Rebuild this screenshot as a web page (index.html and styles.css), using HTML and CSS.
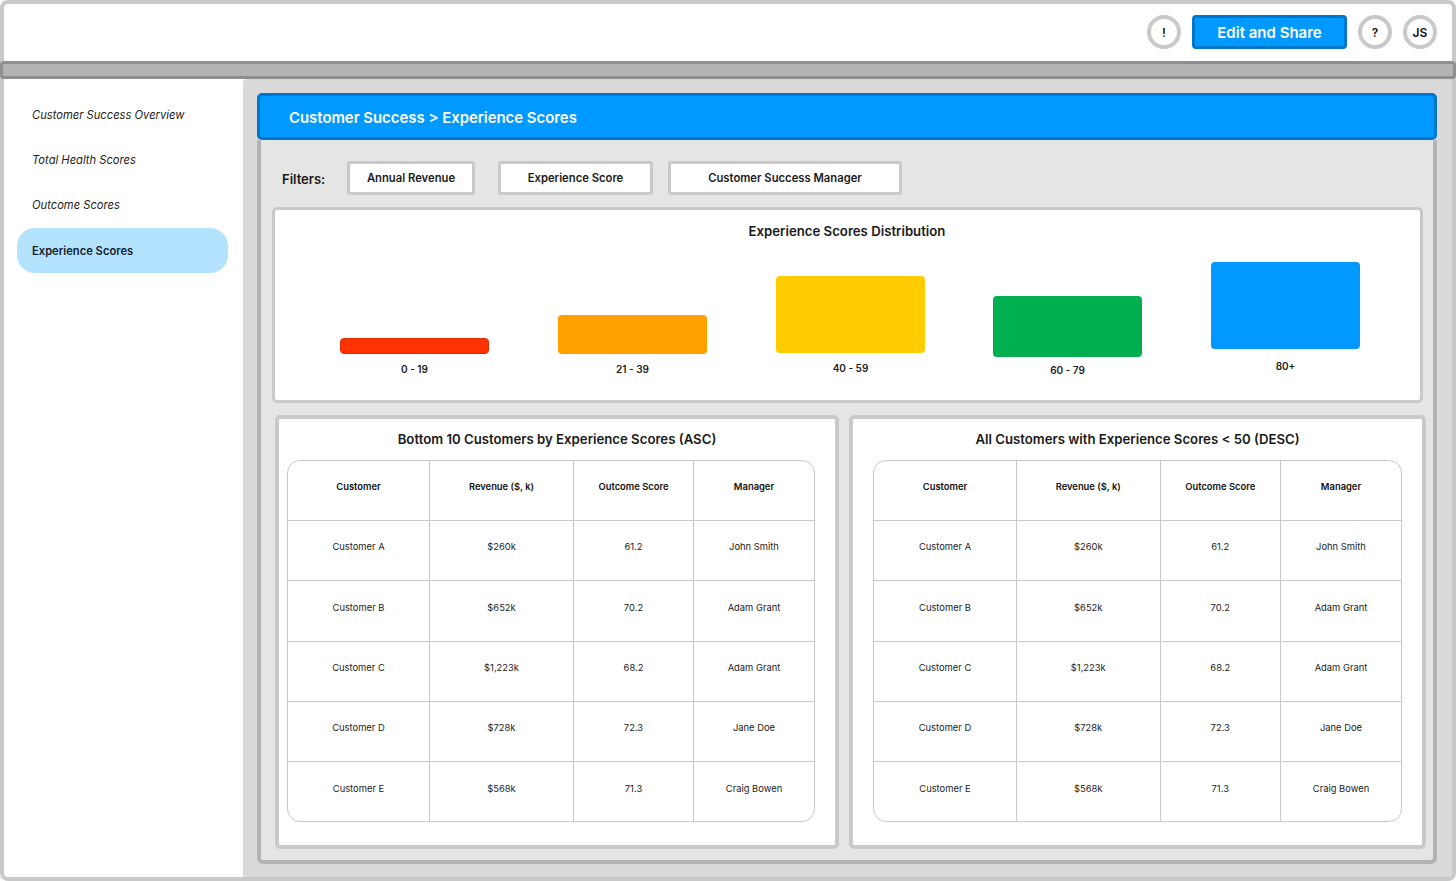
FILE: index.html
```html
<!DOCTYPE html>
<html lang="en">
<head>
<meta charset="utf-8">
<title>Experience Scores</title>
<link rel="stylesheet" href="styles.css">
</head>
<body>
<div class="frame">
  <header class="topbar">
    <div class="round">!</div>
    <button class="share">Edit and Share</button>
    <div class="round help">?</div>
    <div class="round user">JS</div>
  </header>
  <div class="divider"></div>
  <div class="workspace">
    <nav class="sidebar">
      <a class="nav">Customer Success Overview</a>
      <a class="nav">Total Health Scores</a>
      <a class="nav">Outcome Scores</a>
      <a class="nav active">Experience Scores</a>
    </nav>
    <main class="main">
      <div class="panel">
        <div class="crumb">Customer Success &gt; Experience Scores</div>
        <div class="panel-body">
          <div class="filters">
            <span class="filters-label">Filters:</span>
            <div class="filter f1">Annual Revenue</div>
            <div class="filter f2">Experience Score</div>
            <div class="filter f3">Customer Success Manager</div>
          </div>
          <section class="card chart">
            <h2 class="card-title">Experience Scores Distribution</h2>
            <div class="bars">
              <div class="col c1"><div class="bar red"></div><span class="bar-label">0 - 19</span></div>
              <div class="col c2"><div class="bar orange"></div><span class="bar-label">21 - 39</span></div>
              <div class="col c3"><div class="bar yellow"></div><span class="bar-label">40 - 59</span></div>
              <div class="col c4"><div class="bar green"></div><span class="bar-label">60 - 79</span></div>
              <div class="col c5"><div class="bar blue"></div><span class="bar-label">80+</span></div>
            </div>
          </section>
          <div class="tables">
            <section class="card tcard left">
              <h2 class="card-title">Bottom 10 Customers by Experience Scores (ASC)</h2>
              <div class="grid">
                <div class="cell head">Customer</div><div class="cell head">Revenue ($, k)</div><div class="cell head">Outcome Score</div><div class="cell head">Manager</div>
                <div class="cell">Customer A</div><div class="cell">$260k</div><div class="cell">61.2</div><div class="cell">John Smith</div>
                <div class="cell">Customer B</div><div class="cell">$652k</div><div class="cell">70.2</div><div class="cell">Adam Grant</div>
                <div class="cell">Customer C</div><div class="cell">$1,223k</div><div class="cell">68.2</div><div class="cell">Adam Grant</div>
                <div class="cell">Customer D</div><div class="cell">$728k</div><div class="cell">72.3</div><div class="cell">Jane Doe</div>
                <div class="cell">Customer E</div><div class="cell">$568k</div><div class="cell">71.3</div><div class="cell">Craig Bowen</div>
              </div>
            </section>
            <section class="card tcard right">
              <h2 class="card-title">All Customers with Experience Scores &lt; 50 (DESC)</h2>
              <div class="grid">
                <div class="cell head">Customer</div><div class="cell head">Revenue ($, k)</div><div class="cell head">Outcome Score</div><div class="cell head">Manager</div>
                <div class="cell">Customer A</div><div class="cell">$260k</div><div class="cell">61.2</div><div class="cell">John Smith</div>
                <div class="cell">Customer B</div><div class="cell">$652k</div><div class="cell">70.2</div><div class="cell">Adam Grant</div>
                <div class="cell">Customer C</div><div class="cell">$1,223k</div><div class="cell">68.2</div><div class="cell">Adam Grant</div>
                <div class="cell">Customer D</div><div class="cell">$728k</div><div class="cell">72.3</div><div class="cell">Jane Doe</div>
                <div class="cell">Customer E</div><div class="cell">$568k</div><div class="cell">71.3</div><div class="cell">Craig Bowen</div>
              </div>
            </section>
          </div>
        </div>
      </div>
    </main>
  </div>
</div>
</body>
</html>
```
FILE: styles.css
```css
* { box-sizing: border-box; }
html, body { margin: 0; padding: 0; }
body {
  width: 1456px;
  height: 881px;
  overflow: hidden;
  background: #fff;
  font-family: Inter, "Liberation Sans", sans-serif;
  color: #1a1a1a;
}
.frame {
  width: 1456px;
  height: 881px;
  border: 4px solid #c9c9c9;
  border-radius: 8px;
  display: flex;
  flex-direction: column;
  background: #fff;
}
.topbar {
  height: 57px;
  flex: none;
  display: flex;
  align-items: center;
  justify-content: flex-end;
  padding: 0 15px 1px 0;
}
.round {
  width: 34px;
  height: 34px;
  border: 4px solid #c9c9c9;
  border-radius: 50%;
  display: flex;
  align-items: center;
  justify-content: center;
  font-size: 12px;
  font-weight: 600;
  color: #111;
  background: #fff;
}
.share {
  width: 155px;
  height: 34px;
  margin-left: 11px;
  border: 3px solid #0077cc;
  border-radius: 4px;
  background: #0099ff;
  color: #fff;
  font-family: inherit;
  font-size: 15px;
  font-weight: 600;
  padding: 0;
}
.help { margin-left: 11px; }
.user { margin-left: 11px; }
.divider {
  flex: none;
  height: 18px;
  margin: 0 -4px;
  background: #b3b3b3;
  border: 3px solid #8f8f8f;
  border-radius: 4px;
}
.workspace {
  flex: 1;
  min-height: 0;
  display: flex;
}
.sidebar {
  width: 239px;
  flex: none;
  padding: 13px 15px 0 13px;
  display: flex;
  flex-direction: column;
  gap: 0.33px;
}
.nav {
  height: 45px;
  display: flex;
  align-items: center;
  padding-left: 15px;
  font-size: 11.2px;
  font-style: italic;
  color: #222;
}
.nav.active {
  background: #b3e3ff;
  border-radius: 18px;
  font-style: normal;
  font-weight: 600;
  color: #14202b;
  padding-top: 1px;
}
.main {
  flex: 1;
  background: #d9d9d9;
  border-radius: 4px 0 0 0;
  padding: 14px 15px 13px 14px;
  min-width: 0;
}
.panel {
  height: 100%;
  display: flex;
  flex-direction: column;
}
.crumb {
  flex: none;
  height: 47px;
  background: #0099ff;
  border: 3px solid #0077cc;
  border-radius: 5px;
  color: #fff;
  font-size: 14.9px;
  font-weight: 600;
  display: flex;
  align-items: center;
  padding: 2px 0 0 29px;
}
.panel-body {
  flex: 1;
  min-height: 0;
  background: #e5e5e5;
  border: 4px solid #b3b3b3;
  border-top: 0;
  border-radius: 0 0 6px 6px;
  padding-left: 11px;
  display: flex;
  flex-direction: column;
}
.filters {
  height: 67px;
  flex: none;
  display: flex;
  align-items: center;
  padding: 9px 0 0 10px;
}
.filters-label {
  font-size: 13px;
  font-weight: 600;
  width: 65px;
  padding-top: 2px;
}
.filter {
  height: 34px;
  background: #fff;
  border: 3px solid #c9c9c9;
  border-radius: 3px;
  font-size: 11.25px;
  font-weight: 600;
  color: #1a1a1a;
  display: flex;
  align-items: center;
  justify-content: center;
}
.f1 { width: 128px; }
.f2 { width: 155px; margin-left: 23px; }
.f3 { width: 234px; margin-left: 15px; }
.card {
  background: #fff;
  border: 4px solid #c9c9c9;
  border-radius: 5px;
}
.card-title {
  margin: 0;
  font-size: 13.2px;
  font-weight: 600;
  text-align: center;
  color: #1a1a1a;
  line-height: 16px;
}
.chart {
  flex: none;
  width: 1151px;
  height: 196px;
  border-width: 3px;
  padding-top: 13px;
}
.chart .card-title { padding-right: 1px; }
.bars {
  display: flex;
  padding-left: 65px;
  gap: 69px;
  height: 159px;
  align-items: flex-end;
}
.col {
  width: 149px;
  display: flex;
  flex-direction: column;
  align-items: center;
}
.c1, .c2 { margin-bottom: 23px; }
.c3 { margin-bottom: 24px; }
.c4 { margin-bottom: 22px; margin-left: -1px; }
.c5 { margin-bottom: 26px; }
.bar {
  width: 149px;
  border-radius: 4px;
}
.bar-label {
  font-size: 10px;
  font-weight: 600;
  line-height: 12px;
  margin-top: 9px;
  color: #222;
}
.c4 .bar-label { margin-top: 7px; }
.c5 .bar-label { margin-top: 11px; }
.red { height: 16px; background: #ff3300; border: 1px solid #e02d00; }
.orange { height: 39px; background: #ffa000; }
.yellow { height: 77px; background: #ffcc00; }
.green { height: 61px; background: #00b050; }
.blue { height: 87px; background: #0099ff; }
.tables {
  flex: none;
  display: flex;
  margin-top: 12px;
  margin-left: 3px;
}
.tcard {
  height: 434px;
  padding-top: 12px;
}
.left { width: 564px; }
.right { width: 577px; margin-left: 10px; }
.grid {
  display: grid;
  margin-top: 13px;
  grid-template-rows: 60px 60px 61px 60px 60px 59px;
  border: 1px solid #c9c9c9;
  border-radius: 13px;
  overflow: hidden;
}
.left .grid {
  width: 528px;
  margin-left: 8px;
  grid-template-columns: 142px 144px 120px 120px;
}
.right .grid {
  width: 529px;
  margin-left: 20px;
  grid-template-columns: 143px 143.5px 120.5px 120px;
}
.cell {
  display: flex;
  align-items: center;
  justify-content: center;
  font-size: 9.4px;
  color: #222;
  border-right: 1px solid #c9c9c9;
  border-bottom: 1px solid #c9c9c9;
  padding-bottom: 8px;
}
.cell:nth-child(4n) { border-right: 0; }
.cell:nth-last-child(-n+4) { border-bottom: 0; padding-bottom: 7px; }
.head {
  font-weight: 600;
  color: #111;
}
```
